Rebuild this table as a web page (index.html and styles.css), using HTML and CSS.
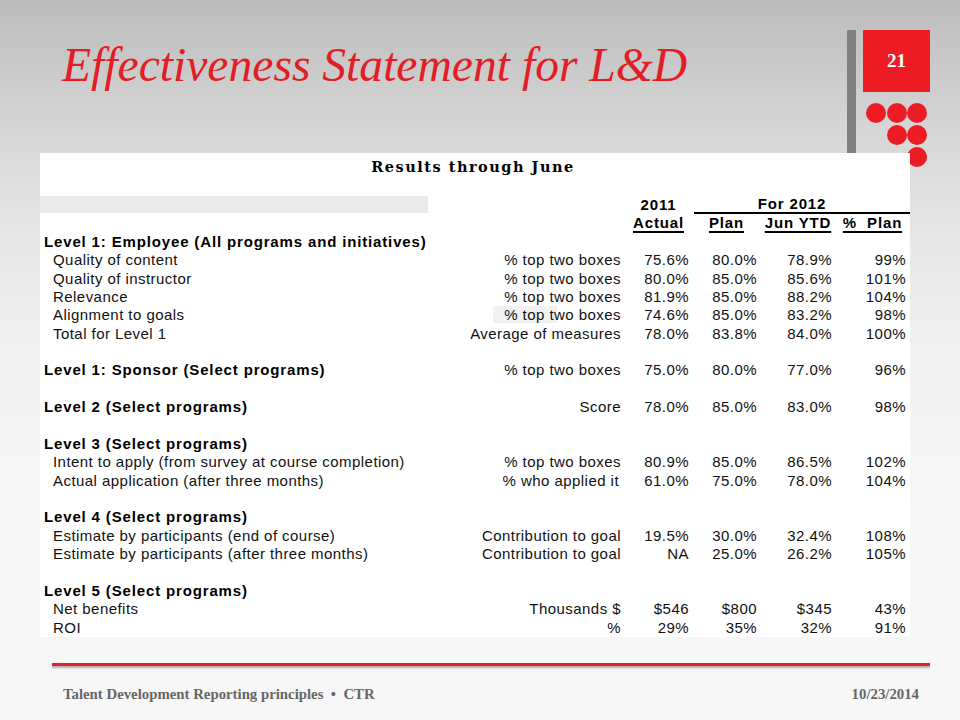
FILE: index.html
```html
<!DOCTYPE html>
<html lang="en">
<head>
<meta charset="utf-8">
<title>Effectiveness Statement for L&amp;D</title>
<link rel="stylesheet" href="styles.css">
</head>
<body>
<div class="slide">
  <header class="top">
    <h1 class="title">Effectiveness Statement for L&amp;D</h1>
    <div class="brand">
      <div class="brand-bar"></div>
      <div class="brand-main">
        <div class="page-num">21</div>
        <div class="dots">
          <span class="dot"></span><span class="dot"></span><span class="dot"></span>
          <span></span><span class="dot"></span><span class="dot"></span>
          <span></span><span></span><span class="dot"></span>
        </div>
      </div>
    </div>
  </header>

  <main class="sheet">
    <div class="sheet-title">Results through June</div>

    <div class="row head">
      <div class="stripe"></div>
      <div></div>
      <div class="hc">2011</div>
      <div class="hc group">For 2012</div>
    </div>
    <div class="row head">
      <div></div>
      <div></div>
      <div class="hc"><u>Actual</u></div>
      <div class="hc"><u>Plan</u></div>
      <div class="hc"><u>Jun YTD</u></div>
      <div class="hc"><u>%&nbsp; Plan</u></div>
    </div>

    <div class="row"><div class="lvl">Level 1: Employee (All programs and initiatives)</div></div>
    <div class="row"><div class="item">Quality of content</div><div class="num">% top two boxes</div><div class="num">75.6%</div><div class="num">80.0%</div><div class="num">78.9%</div><div class="num">99%</div></div>
    <div class="row"><div class="item">Quality of instructor</div><div class="num">% top two boxes</div><div class="num">80.0%</div><div class="num">85.0%</div><div class="num">85.6%</div><div class="num">101%</div></div>
    <div class="row"><div class="item">Relevance</div><div class="num">% top two boxes</div><div class="num">81.9%</div><div class="num">85.0%</div><div class="num">88.2%</div><div class="num">104%</div></div>
    <div class="row"><div class="item">Alignment to goals</div><div class="num"><span class="hl">% top</span> two boxes</div><div class="num">74.6%</div><div class="num">85.0%</div><div class="num">83.2%</div><div class="num">98%</div></div>
    <div class="row"><div class="item">Total for Level 1</div><div class="num">Average of measures</div><div class="num">78.0%</div><div class="num">83.8%</div><div class="num">84.0%</div><div class="num">100%</div></div>
    <div class="row"></div>
    <div class="row"><div class="lvl">Level 1: Sponsor (Select programs)</div><div class="num">% top two boxes</div><div class="num">75.0%</div><div class="num">80.0%</div><div class="num">77.0%</div><div class="num">96%</div></div>
    <div class="row"></div>
    <div class="row"><div class="lvl">Level 2 (Select programs)</div><div class="num">Score</div><div class="num">78.0%</div><div class="num">85.0%</div><div class="num">83.0%</div><div class="num">98%</div></div>
    <div class="row"></div>
    <div class="row"><div class="lvl">Level 3 (Select programs)</div></div>
    <div class="row"><div class="item">Intent to apply (from survey at course completion)</div><div class="num">% top two boxes</div><div class="num">80.9%</div><div class="num">85.0%</div><div class="num">86.5%</div><div class="num">102%</div></div>
    <div class="row"><div class="item">Actual application (after three months)</div><div class="num trail">% who applied it</div><div class="num">61.0%</div><div class="num">75.0%</div><div class="num">78.0%</div><div class="num">104%</div></div>
    <div class="row"></div>
    <div class="row"><div class="lvl">Level 4 (Select programs)</div></div>
    <div class="row"><div class="item">Estimate by participants (end of course)</div><div class="num">Contribution to goal</div><div class="num">19.5%</div><div class="num">30.0%</div><div class="num">32.4%</div><div class="num">108%</div></div>
    <div class="row"><div class="item">Estimate by participants (after three months)</div><div class="num">Contribution to goal</div><div class="num">NA</div><div class="num">25.0%</div><div class="num">26.2%</div><div class="num">105%</div></div>
    <div class="row"></div>
    <div class="row"><div class="lvl">Level 5 (Select programs)</div></div>
    <div class="row"><div class="item">Net benefits</div><div class="num">Thousands $</div><div class="num">$546</div><div class="num">$800</div><div class="num">$345</div><div class="num">43%</div></div>
    <div class="row"><div class="item">ROI</div><div class="num">%</div><div class="num">29%</div><div class="num">35%</div><div class="num">32%</div><div class="num">91%</div></div>
  </main>

  <footer class="foot">
    <div class="foot-rule"></div>
    <div class="foot-text">
      <span>Talent Development Reporting principles&nbsp; •&nbsp; CTR</span>
      <span>10/23/2014</span>
    </div>
  </footer>
</div>
</body>
</html>
```

FILE: styles.css
```css
html, body {
  margin: 0;
  padding: 0;
}

body {
  width: 960px;
  height: 720px;
  overflow: hidden;
}

.slide {
  width: 960px;
  height: 720px;
  display: flex;
  flex-direction: column;
  background: linear-gradient(180deg, #bcbcbc 0%, #d6d6d6 18%, #e6e6e6 32%, #f0f0f0 48%, #f6f6f6 66%, #f7f7f7 100%);
}

/* ---------- header ---------- */
.top {
  height: 153px;
  flex-shrink: 0;
  box-sizing: border-box;
  padding: 30px 30px 0 62px;
  display: flex;
  align-items: flex-start;
}

.title {
  margin: 11px 0 0 0;
  font-family: "Liberation Serif", "Times New Roman", serif;
  font-style: italic;
  font-weight: normal;
  font-size: 47.6px;
  line-height: 48px;
  color: #e31d25;
  white-space: nowrap;
}

.brand {
  margin-left: auto;
  display: flex;
  gap: 7px;
  height: 123px;
}

.brand-bar {
  width: 9px;
  background: #808080;
}

.brand-main {
  width: 67px;
  display: flex;
  flex-direction: column;
}

.page-num {
  flex-shrink: 0;
  height: 62px;
  background: #ed1c24;
  color: #fff;
  font-family: "Liberation Serif", "Times New Roman", serif;
  font-weight: bold;
  font-size: 19px;
  display: flex;
  align-items: center;
  justify-content: center;
}

.dots {
  flex-shrink: 0;
  margin: 11px 0 0 3px;
  display: grid;
  grid-template-columns: repeat(3, 20px);
  grid-template-rows: repeat(3, 20px);
  column-gap: 0.5px;
  row-gap: 2px;
}

.dot {
  border-radius: 50%;
  background: #ed1c24;
}

/* ---------- sheet ---------- */
.sheet {
  position: relative;
  z-index: 1;
  flex-shrink: 0;
  margin-left: 40px;
  width: 870px;
  height: 484px;
  box-sizing: border-box;
  padding-right: 4px;
  background: #fff;
  font-family: "Liberation Sans", Arial, sans-serif;
  font-size: 15px;
  letter-spacing: 0.45px;
  color: #111;
}

.sheet-title {
  height: 43px;
  box-sizing: border-box;
  padding-top: 5px;
  line-height: 18px;
  text-align: center;
  font-family: "DejaVu Serif", "Liberation Serif", serif;
  font-weight: bold;
  font-size: 14.5px;
  letter-spacing: 1.5px;
  color: #000;
}

.row {
  display: grid;
  grid-template-columns: 400px 181px 68px 68px 75px 74px;
  height: 18.38px;
  line-height: 18.38px;
  white-space: nowrap;
}

.lvl {
  padding-left: 4px;
  font-weight: bold;
  letter-spacing: 0.85px;
  color: #000;
}

.item {
  padding-left: 13px;
}

.num {
  text-align: right;
}

.num.trail {
  padding-right: 2px;
}

.hl {
  background: #f1f1f1;
  padding: 0 12px 0 11px;
  margin: 0 -12px 0 -11px;
}

.head {
  font-weight: bold;
  letter-spacing: 0.85px;
  color: #000;
}

.stripe {
  width: 388px;
  background: #ebebeb;
  height: 17px;
}

.hc {
  text-align: center;
  padding-left: 7px;
}

.hc u {
  text-underline-offset: 3px;
  text-decoration-thickness: 2px;
}

.group {
  grid-column: 4 / span 3;
  margin: 0 -4px 0 5px;
  padding: 0 20px 0 0;
  height: 16.4px;
  line-height: 16.4px;
  border-bottom: 2px solid #000;
}

/* ---------- footer ---------- */
.foot {
  flex-shrink: 0;
  margin-top: 26px;
}

.foot-rule {
  margin-left: 52px;
  width: 878px;
  height: 3px;
  background: #e21f26;
  box-shadow: 0 2px 2px rgba(0, 0, 0, 0.3);
}

.foot-text {
  margin-top: 19px;
  padding: 0 41px 0 63px;
  display: flex;
  justify-content: space-between;
  font-family: "Liberation Serif", "Times New Roman", serif;
  font-weight: bold;
  font-size: 14.8px;
  line-height: 18px;
  color: #666;
}
```
